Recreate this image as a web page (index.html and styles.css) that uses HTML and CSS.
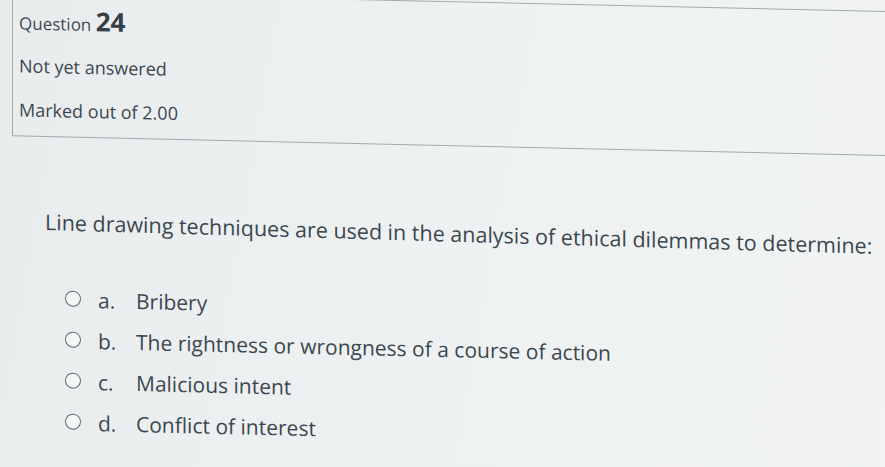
FILE: index.html
```html
<!DOCTYPE html>
<html lang="en">
<head>
<meta charset="utf-8">
<title>Question 24</title>
<link rel="stylesheet" href="styles.css">
</head>
<body>
<div class="page">
  <div class="info">
    <h3 class="qno">Question <span class="qno-num">24</span></h3>
    <div class="state">Not yet answered</div>
    <div class="grade">Marked out of 2.00</div>
  </div>
  <div class="content">
    <p class="qtext">Line drawing techniques are used in the analysis of ethical dilemmas to determine:</p>
    <div class="answers">
      <div class="option"><span class="radio"></span><span class="letter">a.</span><span class="answer">Bribery</span></div>
      <div class="option"><span class="radio"></span><span class="letter">b.</span><span class="answer">The rightness or wrongness of a course of action</span></div>
      <div class="option"><span class="radio"></span><span class="letter">c.</span><span class="answer">Malicious intent</span></div>
      <div class="option"><span class="radio"></span><span class="letter">d.</span><span class="answer">Conflict of interest</span></div>
    </div>
  </div>
</div>
</body>
</html>
```

FILE: styles.css
```css
html, body {
  margin: 0;
  height: 467px;
  overflow: hidden;
}

body {
  background: linear-gradient(100deg, #e9eced 0%, #eef1f1 45%, #f2f4f4 100%);
  font-family: "Open Sans", "Noto Sans", sans-serif;
  color: #3b4750;
}

.page {
  transform: skewY(1.3deg);
  transform-origin: 0 0;
}

.info {
  margin: -9px -40px 0 12px;
  border: 1px solid #a2aaad;
  padding: 14px 6px 12px;
}

.qno {
  margin: 0;
  font-size: 17px;
  line-height: 34px;
  font-weight: 400;
  color: #3f4a52;
}

.qno-num {
  font-size: 26px;
  line-height: 1;
  font-weight: 700;
  color: #353f46;
}

.state {
  margin-top: 11px;
  font-size: 18px;
  line-height: 28px;
}

.grade {
  margin-top: 16px;
  font-size: 18px;
  line-height: 28px;
}

.content {
  padding-left: 45px;
}

.qtext {
  margin: 70px 0 0;
  font-size: 21.5px;
  line-height: 30px;
  transform: skewY(0.35deg);
  transform-origin: 0 50%;
}

.answers {
  margin-top: 42px;
  padding-left: 20px;
}

.option {
  display: flex;
  align-items: center;
  height: 41px;
  font-size: 21px;
  line-height: 41px;
}

.radio {
  flex: none;
  width: 16px;
  height: 16px;
  box-sizing: border-box;
  border: 1.5px solid #5f6a70;
  border-radius: 50%;
  background: #f5f7f7;
  margin-bottom: 3px;
}

.letter {
  width: 38px;
  margin-left: 17px;
}
```
